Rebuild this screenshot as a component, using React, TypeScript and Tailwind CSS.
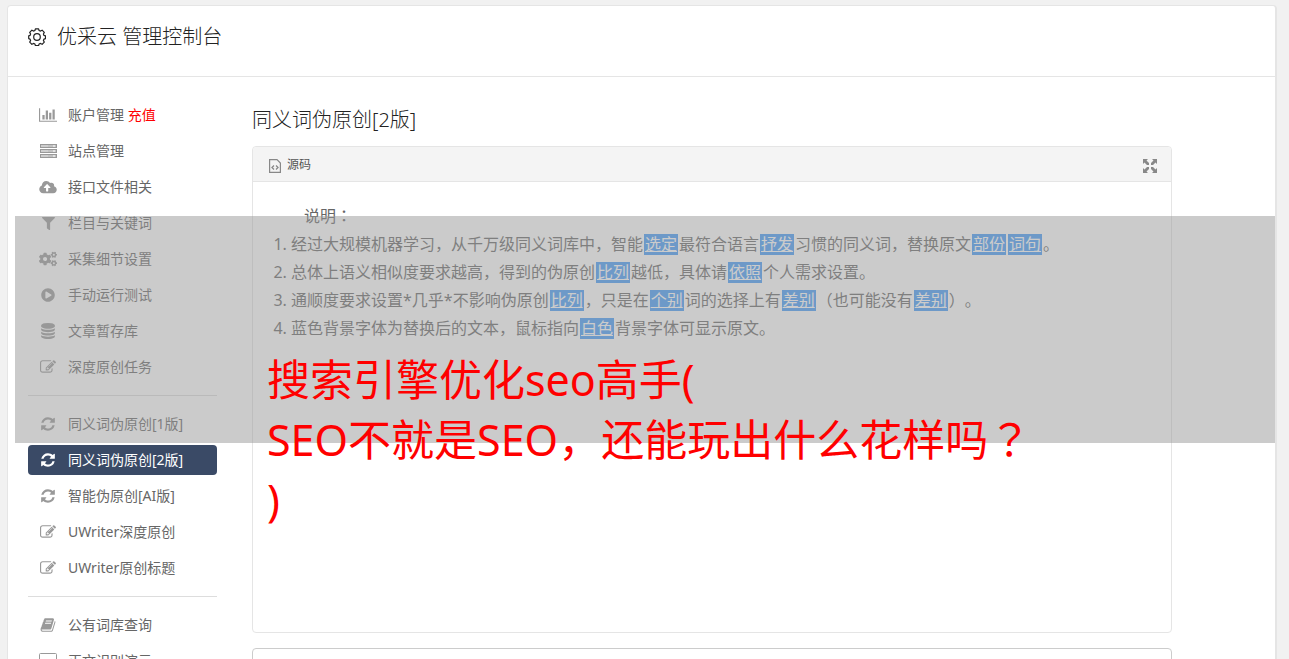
import type { ReactNode } from "react";
import { FaCloudUploadAlt, FaCogs, FaFilter, FaPlayCircle } from "react-icons/fa";

type MenuItem = {
  label: string;
  icon: ReactNode;
  note?: string;
  active?: boolean;
};

type Segment = string | { word: string };

function Glyph({ d, wide = false }: { d: string; wide?: boolean }) {
  return (
    <svg viewBox={wide ? "0 0 2048 1792" : "0 0 1792 1792"} className={wide ? "h-4 w-[18px]" : "size-4"} fill="currentColor" aria-hidden="true">
      <path d={d} />
    </svg>
  );
}

const CHART =
  "M640 896v512h-256v-512h256zm384-512v1024h-256v-1024h256zm1024 1152v128h-2048v-1536h128v1408h1920zm-640-896v768h-256v-768h256zm384-384v1152h-256v-1152h256z";
const DATABASE =
  "M896 768q237 0 443-43t325-127v170q0 69-103 128t-280 93.5-385 34.5-385-34.5-280-93.5-103-128v-170q119 84 325 127t443 43zm0 768q237 0 443-43t325-127v170q0 69-103 128t-280 93.5-385 34.5-385-34.5-280-93.5-103-128v-170q119 84 325 127t443 43zm0-384q237 0 443-43t325-127v170q0 69-103 128t-280 93.5-385 34.5-385-34.5-280-93.5-103-128v-170q119 84 325 127t443 43zm0-1152q208 0 385 34.5t280 93.5 103 128v128q0 69-103 128t-280 93.5-385 34.5-385-34.5-280-93.5-103-128v-128q0-69 103-128t280-93.5 385-34.5z";
const EDIT =
  "M888 1184l116-116-152-152-116 116v56h96v96h56zm440-720q-16-16-33 1l-350 350q-17 17-1 33t33-1l350-350q17-17 1-33zm80 594v190q0 119-84.5 203.5t-203.5 84.5h-832q-119 0-203.5-84.5t-84.5-203.5v-832q0-119 84.5-203.5t203.5-84.5h832q63 0 117 25 15 7 18 23 3 17-9 29l-49 49q-14 14-32 8-23-6-45-6h-832q-66 0-113 47t-47 113v832q0 66 47 113t113 47h832q66 0 113-47t47-113v-126q0-13 9-22l64-64q15-15 35-7t20 29zm-96-738l288 288-672 672h-288v-288zm444 132l-92 92-288-288 92-92q28-28 68-28t68 28l152 152q28 28 28 68t-28 68z";
const REFRESH =
  "M1639 1056q0 5-1 7-64 268-268 434.5t-478 166.5q-146 0-282.5-55t-243.5-157l-129 129q-19 19-45 19t-45-19-19-45v-448q0-26 19-45t45-19h448q26 0 45 19t19 45-19 45l-137 137q71 66 161 102t187 36q134 0 250-65t186-179q11-17 53-117 8-23 30-23h192q13 0 22.5 9.5t9.5 22.5zm25-800v448q0 26-19 45t-45 19h-448q-26 0-45-19t-19-45 19-45l138-138q-148-137-349-137-134 0-250 65t-186 179q-11 17-53 117-8 23-30 23h-199q-13 0-22.5-9.5t-9.5-22.5v-7q65-268 270-434.5t480-166.5q146 0 284 55.5t245 156.5l130-129q19-19 45-19t45 19 19 45z";
const BOOK =
  "M1703 478q40 57 18 129l-275 906q-19 64-76.5 107.5t-122.5 43.5h-923q-77 0-148.5-53.5t-99.5-131.5q-24-67-2-127 0-4 3-27t4-37q1-8-3-21.5t-3-19.5q2-11 8-21t16.5-23.5 16.5-23.5q23-38 45-91.5t30-91.5q3-10 .5-30t-.5-28q3-11 17-28t17-23q21-36 42-92t25-90q1-9-2.5-32t.5-28q4-13 22-30.5t22-22.5q19-26 42.5-84.5t27.5-96.5q1-8-3-25.5t-2-26.5q2-8 9-18t18-23 17-21q8-12 16.5-30.5t15-35 16-36 19.5-32 26.5-23.5 36-11.5 47.5 5.5l-1 3q38-9 51-9h761q74 0 114 56t18 130l-274 906q-36 119-71.5 153.5t-128.5 34.5h-869q-27 0-38 15-11 16-1 43 24 70 144 70h923q29 0 56-15.5t35-41.5l300-987q7-22 5-57 38 15 59 43zm-1064 2q-4 13 2 22.5t20 9.5h608q13 0 25.5-9.5t16.5-22.5l21-64q4-13-2-22.5t-20-9.5h-608q-13 0-25.5 9.5t-16.5 22.5zm-83 256q-4 13 2 22.5t20 9.5h608q13 0 25.5-9.5t16.5-22.5l21-64q4-13-2-22.5t-20-9.5h-608q-13 0-25.5 9.5t-16.5 22.5z";

function ServerIcon() {
  return (
    <svg viewBox="0 0 17 14" className="h-[14px] w-[17px]" fill="none" stroke="currentColor" aria-hidden="true">
      {[0, 5, 10].map((y) => (
        <g key={y}>
          <rect x="0.5" y={y + 0.5} width="16" height="3" fill="currentColor" fillOpacity="0.6" />
          <path d={`M1 ${y + 2}h7`} stroke="white" strokeOpacity="0.4" />
          <path d={`M13 ${y + 2}h2`} stroke="white" />
        </g>
      ))}
    </svg>
  );
}

function ScreenIcon() {
  return (
    <svg viewBox="0 0 18 16" className="h-4 w-[18px]" fill="none" stroke="currentColor" aria-hidden="true">
      <rect x="0.5" y="0.5" width="17" height="12" rx="1" />
      <path d="M5 15.5h8" />
    </svg>
  );
}

function GearIcon() {
  return (
    <svg viewBox="0 0 18 18" className="size-[18px]" fill="none" stroke="currentColor" strokeWidth="1.2" strokeLinejoin="round" aria-hidden="true">
      <circle cx="9" cy="9" r="3.3" />
      <path d="M7.4.8h3.200l.5 1.700 1.400.6 1.600-.9 2.200 2.200-.9 1.600.6 1.400 1.500.5v2.700l-1.500.5-.6 1.400.9 1.600-2.200 2.200-1.600-.9-1.400.6-.5 1.600H7.400l-.5-1.600-1.400-.6-1.600.9-2.200-2.200.9-1.600-.6-1.400-1.300-.5V7.900l1.300-.5.6-1.400-.9-1.600 2.200-2.200 1.600.9 1.400-.6z" />
    </svg>
  );
}

function CodeFileIcon() {
  return (
    <svg viewBox="0 0 12 14" className="h-[14px] w-3" fill="none" stroke="currentColor" aria-hidden="true">
      <path d="M.6.6H8L11.4 4v9.4H.6z" strokeWidth="1.2" />
      <path d="M5 6.5l-2 2 2 2M7 6.5l2 2-2 2" strokeWidth="1.3" />
    </svg>
  );
}

function ExpandIcon() {
  return (
    <svg viewBox="0 0 14 14" className="size-[14px]" fill="currentColor" aria-hidden="true">
      <path d="M0 0h5L3.500 1.500 6 4v2H4L1.500 3.500 0 5zM14 0v5l-1.500-1.500L10 6H8V4l2.500-2.500L9 0zM0 14V9l1.500 1.500L4 8h2v2l-2.500 2.500L5 14zM14 14H9l1.500-1.500L8 10V8h2l2.500 2.500L14 9z" />
    </svg>
  );
}

const MENU_GROUPS: MenuItem[][] = [
  [
    { label: "账户管理", note: "充值", icon: <Glyph d={CHART} wide /> },
    { label: "站点管理", icon: <ServerIcon /> },
    { label: "接口文件相关", icon: <FaCloudUploadAlt className="h-[14px] w-[18px]" /> },
    { label: "栏目与关键词", icon: <FaFilter className="size-[13px]" /> },
    { label: "采集细节设置", icon: <FaCogs className="h-4 w-[18px]" /> },
    { label: "手动运行测试", icon: <FaPlayCircle className="size-[14px]" /> },
    { label: "文章暂存库", icon: <Glyph d={DATABASE} /> },
    { label: "深度原创任务", icon: <Glyph d={EDIT} /> },
  ],
  [
    { label: "同义词伪原创[1版]", icon: <Glyph d={REFRESH} /> },
    { label: "同义词伪原创[2版]", icon: <Glyph d={REFRESH} />, active: true },
    { label: "智能伪原创[AI版]", icon: <Glyph d={REFRESH} /> },
    { label: "UWriter深度原创", icon: <Glyph d={EDIT} /> },
    { label: "UWriter原创标题", icon: <Glyph d={EDIT} /> },
  ],
  [
    { label: "公有词库查询", icon: <Glyph d={BOOK} /> },
    { label: "正文识别演示", icon: <ScreenIcon /> },
  ],
];

const NOTES: Segment[][] = [
  [
    "经过大规模机器学习，从千万级同义词库中，智能",
    { word: "选定" },
    "最符合语言",
    { word: "抒发" },
    "习惯的同义词，替换原文",
    { word: "部份" },
    { word: "词句" },
    "。",
  ],
  ["总体上语义相似度要求越高，得到的伪原创", { word: "比列" }, "越低，具体请", { word: "依照" }, "个人需求设置。"],
  [
    "通顺度要求设置*几乎*不影响伪原创",
    { word: "比列" },
    "，只是在",
    { word: "个别" },
    "词的选择上有",
    { word: "差别" },
    "（也可能没有",
    { word: "差别" },
    "）。",
  ],
  ["蓝色背景字体为替换后的文本，鼠标指向", { word: "白色" }, "背景字体可显示原文。"],
];

// colons and question marks sit in the middle of their full-width box
function Prose({ text }: { text: string }) {
  return text.split(/([：？])/).map((part, index) =>
    index % 2 === 1 ? (
      <span key={index} lang="zh-TW" className="font-['Noto_Sans','Noto_Sans_CJK_TC',sans-serif]">
        {part}
      </span>
    ) : (
      part
    ),
  );
}

function MenuLink({ item }: { item: MenuItem }) {
  return (
    <a
      href="#"
      className={`flex h-[30px] items-center rounded-sm pl-[10px] text-sm whitespace-nowrap ${
        item.active ? "bg-[#3a4a66] text-white" : "text-[#666]"
      }`}
    >
      <span className={`mr-[10px] flex w-5 shrink-0 justify-center ${item.active ? "text-white" : "text-[#999]"}`}>{item.icon}</span>
      <span>
        {item.label}
        {item.note ? <span className="text-[#f00]"> {item.note}</span> : null}
      </span>
    </a>
  );
}

function Sidebar() {
  return (
    <nav className="w-[189px] shrink-0">
      {MENU_GROUPS.map((group, index) => (
        <div key={group[0].label} className={index > 0 ? "mt-[13px] border-t border-[#ddd] pt-[13px]" : ""}>
          <ul className="flex flex-col gap-[6px]">
            {group.map((item) => (
              <li key={item.label}>
                <MenuLink item={item} />
              </li>
            ))}
          </ul>
        </div>
      ))}
    </nav>
  );
}

function SourcePanel() {
  return (
    <section className="rounded border border-[#e5e5e5]">
      <header className="flex h-[35px] items-center justify-between rounded-t border-b border-[#e5e5e5] bg-[#f4f4f4] pt-[2px] pr-[14px] pl-4">
        <h3 className="flex items-center gap-[6px] text-xs text-[#555]">
          <span className="pt-[2px] text-[#888]">
            <CodeFileIcon />
          </span>
          源码
        </h3>
        <button type="button" aria-label="全屏" className="pt-[2px] text-[#888]">
          <ExpandIcon />
        </button>
      </header>
      <div className="min-h-[450px] pt-5 text-base leading-7 text-[#666]">
        <p className="pl-[51px]">
          <Prose text="说明：" />
        </p>
        <ol className="list-decimal pl-[38px]">
          {NOTES.map((segments, index) => (
            <li key={index}>
              {segments.map((segment, segmentIndex) =>
                typeof segment === "string" ? (
                  segment
                ) : (
                  <span key={segmentIndex} className="mx-px inline-block bg-[#439bf9] px-px leading-[21px] text-white underline">
                    {segment.word}
                  </span>
                ),
              )}
            </li>
          ))}
        </ol>
      </div>
    </section>
  );
}

export default function App() {
  return (
    <div className="relative h-screen overflow-hidden bg-[#f1f1f1] pt-[5px] pr-3 pl-[7px] font-['Noto_Sans','Noto_Sans_CJK_SC',sans-serif] [text-spacing-trim:space-all]">
      <div className="min-h-full rounded-t border border-r-2 border-[#e5e5e5] bg-white">
        <header className="flex h-[71px] items-start border-b border-[#e5e5e5] pt-4 pl-5 text-[#222]">
          <h1 className="flex items-center gap-[11px] text-xl leading-[30px] font-light">
            <GearIcon />
            优采云 管理控制台
          </h1>
        </header>
        <div className="flex gap-[35px] pt-[23px] pr-[103px] pl-5">
          <Sidebar />
          <main className="min-w-0 flex-1">
            <h2 className="mb-[11px] pt-[5px] text-xl leading-[30px] font-light text-[#222]">同义词伪原创[2版]</h2>
            <SourcePanel />
            <textarea aria-label="结果" className="mt-[15px] block h-40 w-full resize-none rounded border border-[#ccc]" />
          </main>
        </div>
      </div>

      {/* caption band laid over the console */}
      <div className="absolute top-[216px] right-[14px] left-[15px] h-[227px] bg-[#979797]/50">
        <p className="pt-[134px] pl-[252px] text-[43px] leading-[60px] text-[#f00]">
          搜索引擎优化seo高手(
          <br />
          <Prose text="SEO不就是SEO，还能玩出什么花样吗？" />
          <br />)
        </p>
      </div>
    </div>
  );
}
